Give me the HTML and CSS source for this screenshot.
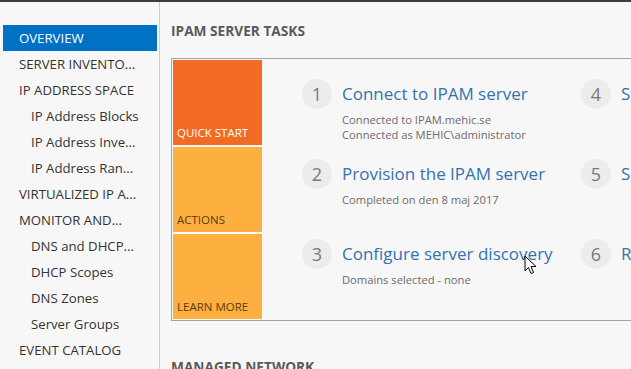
FILE: index.html
```html
<!DOCTYPE html>
<html lang="en">
<head>
  <meta charset="UTF-8">
  <title>IPAM</title>
  <link rel="stylesheet" href="styles.css">
</head>
<body>

<div class="top-bar"></div>

<div class="layout">
  <ul class="nav">
    <li class="active">OVERVIEW</li>
    <li>SERVER INVENTO...</li>
    <li>IP ADDRESS SPACE</li>
    <li class="sub">IP Address Blocks</li>
    <li class="sub">IP Address Inve...</li>
    <li class="sub">IP Address Ran...</li>
    <li>VIRTUALIZED IP A...</li>
    <li>MONITOR AND...</li>
    <li class="sub">DNS and DHCP...</li>
    <li class="sub">DHCP Scopes</li>
    <li class="sub">DNS Zones</li>
    <li class="sub">Server Groups</li>
    <li>EVENT CATALOG</li>
  </ul>

  <div class="main">
    <h2 class="section-title">IPAM SERVER TASKS</h2>

    <div class="task-box">
      <div class="tiles">
        <div class="tile tile-quick">QUICK START</div>
        <div class="tile tile-light">ACTIONS</div>
        <div class="tile tile-light">LEARN MORE</div>
      </div>

      <div class="steps">
        <div class="step">
          <span class="step-num">1</span>
          <div class="step-body">
            <a class="step-title">Connect to IPAM server</a>
            <div class="step-note">Connected to IPAM.mehic.se</div>
            <div class="step-note">Connected as MEHIC\administrator</div>
          </div>
        </div>
        <div class="step">
          <span class="step-num">4</span>
          <div class="step-body">
            <a class="step-title">Start server discovery</a>
          </div>
        </div>
        <div class="step">
          <span class="step-num">2</span>
          <div class="step-body">
            <a class="step-title">Provision the IPAM server</a>
            <div class="step-note">Completed on den 8 maj 2017</div>
          </div>
        </div>
        <div class="step">
          <span class="step-num">5</span>
          <div class="step-body">
            <a class="step-title">Select or add servers</a>
          </div>
        </div>
        <div class="step">
          <span class="step-num">3</span>
          <div class="step-body">
            <a class="step-title">Configure server discovery</a>
            <div class="step-note">Domains selected - none</div>
          </div>
        </div>
        <div class="step">
          <span class="step-num">6</span>
          <div class="step-body">
            <a class="step-title">Retrieve data from managed servers</a>
          </div>
        </div>
      </div>
    </div>

    <h2 class="section-title section-next">MANAGED NETWORK</h2>
  </div>
</div>

<svg class="cursor" width="14" height="20" viewBox="0 0 14 20">
  <path d="M1 1 L1 16 L4.5 12.5 L7 18.5 L9.5 17.5 L7 11.5 L12 11.5 Z" fill="#fff" stroke="#000" stroke-width="1" stroke-linejoin="round"/>
</svg>

</body>
</html>
```

FILE: styles.css
```css
* {
  box-sizing: border-box;
}

html, body {
  height: 100%;
}

body {
  margin: 0;
  font-family: "Open Sans", "Noto Sans", Arial, sans-serif;
  background: #f7f7f7;
  color: #333;
  overflow: hidden;
}

.top-bar {
  height: 2px;
  background: #3c3c3c;
}

.layout {
  display: flex;
  height: calc(100% - 2px);
}

.nav {
  list-style: none;
  margin: 0;
  padding: 23px 0 0 0;
  width: 160px;
  flex-shrink: 0;
  border-right: 1px solid #cfcfcf;
}

.nav li {
  height: 26px;
  line-height: 27px;
  margin: 0 2px 0 3px;
  padding-left: 16px;
  font-size: 13.2px;
  color: #333;
  white-space: nowrap;
}

.nav li.sub {
  padding-left: 28px;
}

.nav li.active {
  background: #0072c6;
  color: #fff;
}

.main {
  flex: 1;
  min-width: 0;
  padding: 21px 0 0 11px;
  overflow: hidden;
}

.section-title {
  margin: 0;
  font-size: 13.7px;
  font-weight: bold;
  line-height: 16px;
  color: #5a5a5a;
}

.section-next {
  margin-top: 38px;
}

.task-box {
  display: flex;
  margin-top: 19px;
  width: 720px;
  border: 1px solid #a3a3a3;
  border-right: none;
}

.tiles {
  display: flex;
  flex-direction: column;
  gap: 2px;
  padding: 1px;
  width: 91px;
  flex-shrink: 0;
}

.tile {
  height: 85px;
  display: flex;
  align-items: flex-end;
  padding: 0 0 5px 4px;
  font-size: 11.5px;
}

.tile-quick {
  background: #f26b25;
  color: #fff;
}

.tile-light {
  background: #fdb040;
  color: #5b3a12;
}

.steps {
  display: grid;
  grid-template-columns: 279px 279px;
  grid-auto-rows: 80px;
  padding: 20px 0 0 39px;
}

.step {
  display: flex;
  align-items: flex-start;
  gap: 10px;
}

.step-num {
  width: 30px;
  height: 30px;
  flex-shrink: 0;
  border-radius: 50%;
  background: #ececec;
  color: #7a7a7a;
  font-size: 18px;
  line-height: 30px;
  text-align: center;
}

.step-title {
  display: block;
  font-size: 17px;
  line-height: 30px;
  color: #3572ad;
  white-space: nowrap;
  cursor: pointer;
}

.step-note {
  font-size: 11.2px;
  line-height: 15px;
  color: #6c6c6c;
  white-space: nowrap;
}

.step-title + .step-note {
  margin-top: 3px;
}

.cursor {
  position: absolute;
  left: 524px;
  top: 255px;
}
```
